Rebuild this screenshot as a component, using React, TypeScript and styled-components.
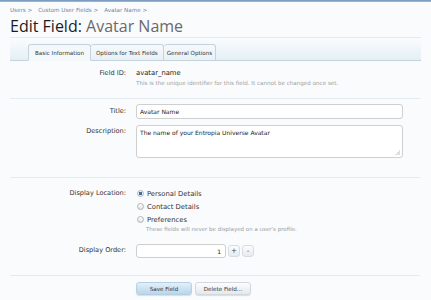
import React, { FC } from 'react';
import styled, { createGlobalStyle } from 'styled-components';

const GlobalStyle = createGlobalStyle`
    html, body {
        margin: 0;
        padding: 0;
        background: #fafbfd;
    }
    body {
        font-family: 'DejaVu Sans', Verdana, sans-serif;
        color: #222;
    }
`;

const App: FC = () => {
    return (
        <Page>
            <GlobalStyle />
            <TopStrip />
            <Content>
                <Breadcrumb>
                    <Crumb>Users &gt;</Crumb>
                    <Crumb>Custom User Fields &gt;</Crumb>
                    <Crumb>Avatar Name &gt;</Crumb>
                </Breadcrumb>
                <Title>
                    Edit Field: <TitleSub>Avatar Name</TitleSub>
                </Title>
                <TabBar>
                    <Tab active pad={6}>Basic Information</Tab>
                    <Tab pad={5}>Options for Text Fields</Tab>
                    <Tab pad={3}>General Options</Tab>
                </TabBar>

                <Row top={8}>
                    <Label>Field ID:</Label>
                    <Control>
                        <Value>avatar_name</Value>
                        <Hint>
                            This is the unique identifier for this field. It cannot be changed
                            once set.
                        </Hint>
                    </Control>
                </Row>
                <Divider top={11} />

                <Row top={5}>
                    <Label pad={3}>Title:</Label>
                    <Control>
                        <TextInput defaultValue="Avatar Name" />
                    </Control>
                </Row>
                <Row top={6}>
                    <Label pad={2}>Description:</Label>
                    <Control>
                        <TextAreaWrap>
                            <TextArea defaultValue="The name of your Entropia Universe Avatar" />
                            <Grip />
                        </TextAreaWrap>
                    </Control>
                </Row>
                <Divider top={19} />

                <Row top={9}>
                    <Label pad={2}>Display Location:</Label>
                    <Control>
                        <RadioRow>
                            <Radio checked />
                            Personal Details
                        </RadioRow>
                        <RadioRow>
                            <Radio />
                            Contact Details
                        </RadioRow>
                        <RadioRow>
                            <Radio />
                            Preferences
                        </RadioRow>
                        <Hint indent>These fields will never be displayed on a user's profile.</Hint>
                    </Control>
                </Row>

                <Row top={11}>
                    <Label pad={2}>Display Order:</Label>
                    <Control>
                        <SpinRow>
                            <NumberInput defaultValue="1" />
                            <SpinButton>+</SpinButton>
                            <SpinButton>-</SpinButton>
                        </SpinRow>
                    </Control>
                </Row>
                <Divider top={17} />

                <Row top={6}>
                    <Label />
                    <ButtonRow>
                        <Button primary>Save Field</Button>
                        <Button>Delete Field...</Button>
                    </ButtonRow>
                </Row>
            </Content>
        </Page>
    );
};

export default App;

const Page = styled.div`
    width: 431px;
    height: 300px;
    overflow: hidden;
    background: #fafbfd;
`;

const TopStrip = styled.div`
    height: 2px;
    background: linear-gradient(#6d90b8, #a9c0d8);
`;

const Content = styled.div`
    padding: 0 10px;
`;

const Breadcrumb = styled.div`
    display: flex;
    gap: 6px;
    padding-top: 5px;
    font-size: 5.6px;
    color: #6b88aa;
    line-height: 7px;
`;

const Crumb = styled.span``;

const Title = styled.h1`
    margin: 2px 0 0;
    font-family: 'Open Sans', 'DejaVu Sans', sans-serif;
    font-weight: normal;
    font-size: 16px;
    line-height: 20px;
    color: #1c1c1c;
    padding-bottom: 1px;
    border-bottom: 1px solid #e3eaf0;
`;

const TitleSub = styled.span`
    color: #6a6a6a;
`;

const TabBar = styled.div`
    display: flex;
    align-items: flex-end;
    height: 22px;
    padding-left: 18px;
    background: linear-gradient(#fafcfe, #e4eff5);
    border-bottom: 1px solid #c3d4de;
`;

const Tab = styled.div<{ active?: boolean; pad: number }>`
    height: 15px;
    padding: 0 ${p => p.pad}px;
    margin-bottom: -1px;
    display: flex;
    align-items: center;
    font-size: 5.6px;
    color: #333;
    background: ${p => (p.active ? '#f4f8fb' : 'linear-gradient(#f6f9fc, #e9f1f6)')};
    border: 1px solid #c3d4de;
    border-bottom-color: ${p => (p.active ? '#f4f8fb' : '#c3d4de')};
    border-left-width: ${p => (p.active ? '1px' : '0')};
    border-radius: 3px 3px 0 0;
`;

const Row = styled.div<{ top?: number }>`
    display: flex;
    margin-top: ${p => p.top ?? 0}px;
`;

const Label = styled.div<{ pad?: number }>`
    width: 116px;
    flex: none;
    padding-right: 10px;
    padding-top: ${p => p.pad ?? 0}px;
    text-align: right;
    font-size: 6.6px;
    line-height: 9px;
    color: #333;
`;

const Control = styled.div`
    flex: 1;
    padding-right: 18px;
`;

const Value = styled.div`
    font-size: 6.8px;
    line-height: 9px;
    color: #222;
`;

const Hint = styled.div<{ indent?: boolean }>`
    margin-top: ${p => (p.indent ? '0' : '2px')};
    padding-left: ${p => (p.indent ? '10px' : '0')};
    font-size: ${p => (p.indent ? '5.5px' : '5.6px')};
    line-height: 7px;
    color: #a0a0a0;
`;

const Divider = styled.div<{ top?: number }>`
    height: 1px;
    margin-top: ${p => p.top ?? 8}px;
    margin-right: 1px;
    background: #e3eaf0;
`;

const TextInput = styled.input`
    box-sizing: border-box;
    display: block;
    width: 100%;
    height: 15px;
    padding: 0 3px;
    border: 1px solid #cfcfcf;
    border-radius: 3px;
    background: #fff;
    font-family: 'DejaVu Sans', sans-serif;
    font-size: 6px;
    color: #222;
    outline: none;
`;

const TextAreaWrap = styled.div`
    position: relative;
`;

const TextArea = styled.textarea`
    box-sizing: border-box;
    display: block;
    width: 100%;
    height: 33px;
    margin: 0;
    padding: 3px 3px;
    border: 1px solid #cfcfcf;
    border-radius: 3px;
    background: #fff;
    font-family: 'DejaVu Sans', sans-serif;
    font-size: 6px;
    line-height: 8px;
    color: #222;
    outline: none;
    resize: none;
`;

const Grip = styled.span`
    position: absolute;
    right: 3px;
    bottom: 3px;
    width: 5px;
    height: 5px;
    background:
        radial-gradient(circle, #b8b8b8 0.6px, transparent 0.8px) 4px 0 / 2px 2px no-repeat,
        radial-gradient(circle, #b8b8b8 0.6px, transparent 0.8px) 2px 2px / 2px 2px no-repeat,
        radial-gradient(circle, #b8b8b8 0.6px, transparent 0.8px) 4px 2px / 2px 2px no-repeat,
        radial-gradient(circle, #b8b8b8 0.6px, transparent 0.8px) 0 4px / 2px 2px no-repeat,
        radial-gradient(circle, #b8b8b8 0.6px, transparent 0.8px) 2px 4px / 2px 2px no-repeat,
        radial-gradient(circle, #b8b8b8 0.6px, transparent 0.8px) 4px 4px / 2px 2px no-repeat;
`;

const RadioRow = styled.div`
    display: flex;
    align-items: center;
    gap: 3px;
    height: 13px;
    font-size: 6.8px;
    color: #333;
`;

const Radio = styled.span<{ checked?: boolean }>`
    box-sizing: border-box;
    flex: none;
    width: 7px;
    height: 7px;
    margin-left: 1px;
    border-radius: 50%;
    border: 1px solid #b5b5b5;
    background: ${p =>
        p.checked
            ? 'radial-gradient(circle, #3a6fb0 0 1.5px, #e8eef5 2px)'
            : 'linear-gradient(#fff, #e2e2e2)'};
`;

const SpinRow = styled.div`
    display: flex;
    align-items: center;
    gap: 2px;
`;

const NumberInput = styled.input`
    box-sizing: border-box;
    width: 90px;
    height: 14px;
    padding: 0 4px;
    border: 1px solid #cfcfcf;
    border-radius: 3px;
    background: #fff;
    text-align: right;
    font-family: 'DejaVu Sans', sans-serif;
    font-size: 6px;
    color: #222;
    outline: none;
`;

const SpinButton = styled.div`
    box-sizing: border-box;
    width: 12px;
    height: 12px;
    display: flex;
    align-items: center;
    justify-content: center;
    border: 1px solid #d8dde2;
    border-radius: 3px;
    background: linear-gradient(#fbfcfd, #e6eaee);
    font-size: 7px;
    color: #444;
`;

const ButtonRow = styled.div`
    display: flex;
    gap: 3px;
`;

const Button = styled.div<{ primary?: boolean }>`
    box-sizing: border-box;
    width: 56px;
    height: 13px;
    display: flex;
    align-items: center;
    justify-content: center;
    border-radius: 3px;
    border: 1px solid ${p => (p.primary ? '#b6cfe2' : '#d3d8de')};
    background: ${p =>
        p.primary ? 'linear-gradient(#e3eff8, #b9d6ea)' : 'linear-gradient(#fcfdfe, #e4e8ec)'};
    box-shadow: 0 1px 1px rgba(0, 0, 0, 0.12);
    font-size: 5.6px;
    color: #333;
`;
